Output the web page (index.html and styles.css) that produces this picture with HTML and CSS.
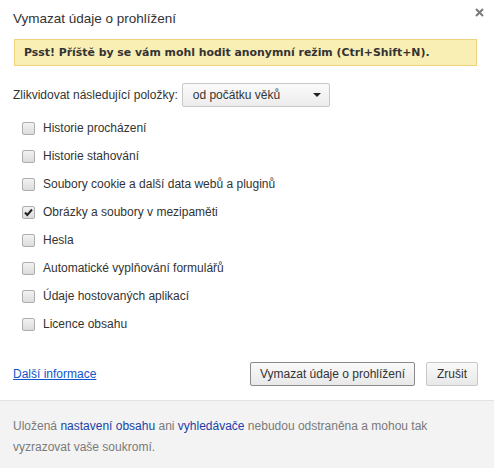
FILE: index.html
```html
<!DOCTYPE html>
<html>
<head>
    <title>Vymazat údaje o prohlížení</title>
    <link rel="stylesheet" href="styles.css">
</head>
<body>
    <div class="dialog">
        <div class="dialog-head">
            <h1>Vymazat údaje o prohlížení</h1>
            <span class="close">
                <svg width="9" height="9" viewBox="0 0 9 9"><path d="M1 1L8 8M8 1L1 8" stroke="#7a7a7a" stroke-width="2"/></svg>
            </span>
        </div>

        <div class="banner">Psst! Příště by se vám mohl hodit anonymní režim (Ctrl+Shift+N).</div>

        <div class="range-row">
            <span>Zlikvidovat následující položky:</span>
            <div class="select">
                <span>od počátku věků</span>
                <span class="arrow"></span>
            </div>
        </div>

        <ul class="items">
            <li><span class="box"></span>Historie procházení</li>
            <li><span class="box"></span>Historie stahování</li>
            <li><span class="box"></span>Soubory cookie a další data webů a pluginů</li>
            <li><span class="box"><svg width="11" height="11" viewBox="0 0 11 11"><path d="M2 5.5L4.3 8L9 2.5" fill="none" stroke="#222" stroke-width="2"/></svg></span>Obrázky a soubory v mezipaměti</li>
            <li><span class="box"></span>Hesla</li>
            <li><span class="box"></span>Automatické vyplňování formulářů</li>
            <li><span class="box"></span>Údaje hostovaných aplikací</li>
            <li><span class="box"></span>Licence obsahu</li>
        </ul>

        <div class="actions">
            <a href="#" class="more">Další informace</a>
            <div class="buttons">
                <button class="btn primary">Vymazat údaje o prohlížení</button>
                <button class="btn">Zrušit</button>
            </div>
        </div>

        <div class="footer">
            <p>Uložená <a href="#">nastavení obsahu</a> ani <a href="#">vyhledávače</a> nebudou odstraněna a mohou tak vyzrazovat vaše soukromí.</p>
        </div>
    </div>
</body>
</html>
```

FILE: styles.css
```css
body {
    margin: 0;
    background: white;
    font-family: "Liberation Sans", Arial, sans-serif;
    font-size: 12px;
    color: #333;
}
.dialog {
    width: 494px;
    height: 468px;
    display: flex;
    flex-direction: column;
}
.dialog-head {
    display: flex;
    justify-content: space-between;
    padding: 11px 10px 0 13px;
    height: 28px;
}
.dialog-head h1 {
    margin: 0;
    font-size: 13.5px;
    font-weight: normal;
    color: #333;
}
.close {
    display: flex;
    margin-top: -3px;
}
.banner {
    margin: 0 17px 0 14px;
    height: 25px;
    line-height: 25px;
    padding-left: 9px;
    background: #f9eeb4;
    border: 1px solid #f0d27c;
    font-family: "DejaVu Sans", sans-serif;
    font-weight: bold;
    font-size: 10.9px;
    color: #333;
}
.range-row {
    display: flex;
    align-items: center;
    gap: 4px;
    padding: 17px 0 0 13px;
}
.select {
    display: flex;
    align-items: center;
    justify-content: space-between;
    padding: 0 8px 0 10px;
    box-sizing: border-box;
    width: 148px;
    height: 24px;
    border: 1px solid #c8c8c8;
    border-radius: 2px;
    background: linear-gradient(#fafafa, #ececec);
}
.arrow {
    width: 0;
    height: 0;
    border-left: 4px solid transparent;
    border-right: 4px solid transparent;
    border-top: 4px solid #222;
}
.items {
    list-style: none;
    margin: 0;
    padding: 7px 0 0 22px;
}
.items li {
    display: flex;
    align-items: center;
    gap: 8px;
    height: 28px;
}
.box {
    display: flex;
    width: 11px;
    height: 11px;
    border: 1px solid #adadad;
    border-radius: 2px;
    background: linear-gradient(#f2f2f2, #dcdcdc);
}
.actions {
    display: flex;
    justify-content: space-between;
    align-items: center;
    padding: 24px 16px 0 13px;
}
.more {
    color: #1155cc;
}
.buttons {
    display: flex;
    gap: 11px;
}
.btn {
    font-family: "Liberation Sans", Arial, sans-serif;
    font-size: 12px;
    color: #333;
    height: 24px;
    padding: 0 10px;
    border: 1px solid #c8c8c8;
    border-radius: 2px;
    background: linear-gradient(#fafafa, #e8e8e8);
}
.btn.primary {
    border-color: #8a8a8a;
    padding: 0 9px;
}
.footer {
    margin-top: 14px;
    flex: 1;
    background: #f3f3f3;
    border-top: 1px solid #e3e3e3;
    padding: 15px 13px 0;
    color: #7a7a7a;
}
.footer p {
    margin: 0;
    line-height: 21px;
}
.footer a {
    color: #1a3fa8;
    text-decoration: none;
}
```
